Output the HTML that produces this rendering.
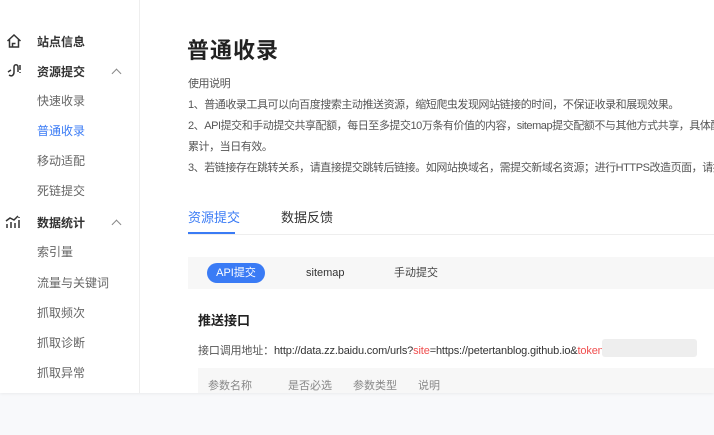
<!DOCTYPE html>
<html><head><meta charset="utf-8"><style>
*{margin:0;padding:0;box-sizing:border-box}
body{width:714px;height:435px;overflow:hidden;background:#f8f9fb;font-family:"Liberation Sans","Noto Sans CJK SC",sans-serif;position:relative;color:#333}
.main{position:absolute;left:0;top:0;width:714px;height:393px;background:#fff;box-shadow:0 1px 3px rgba(0,0,0,.06);overflow:hidden}
.side{position:absolute;left:0;top:0;width:140px;height:393px;border-right:1px solid #eee}
.it{position:absolute;left:37px;font-size:12px;color:#666;line-height:16px;white-space:nowrap}
.h{font-weight:bold;color:#333}
.act{color:#3a7bf5}
.chev{position:absolute;left:113px;width:7px;height:7px;border-left:1.3px solid #888;border-top:1.3px solid #888;transform:rotate(45deg)}
.t{position:absolute;white-space:nowrap}
</style></head><body>
<div class="main">
<div class="side">
<svg style="position:absolute;left:6px;top:33px" width="16" height="16" viewBox="0 0 16 16" fill="none" stroke="#333" stroke-width="1.5"><path d="M1.5 8 L8 2 L14.5 8 M3.5 6.5 V14 H12.5 V6.5 M6.5 14 V10.5 H9.5"/></svg>
<div class="it h" style="top:34px">站点信息</div>
<svg style="position:absolute;left:6px;top:63px" width="16" height="16" viewBox="0 0 16 16" fill="none" stroke="#333" stroke-width="1.5"><path d="M2 9 L5 7 M3 12 C6 14 8 12 8 9 V4 C8 1 12 1 12 4 V9 M14 2 V7 M14 9 V10"/></svg>
<div class="it h" style="top:64px">资源提交</div><div class="chev" style="top:70px"></div>
<div class="it" style="top:93px">快速收录</div>
<div class="it act" style="top:123px">普通收录</div>
<div class="it" style="top:153px">移动适配</div>
<div class="it" style="top:183px">死链提交</div>
<svg style="position:absolute;left:5px;top:214px" width="16" height="16" viewBox="0 0 16 16" fill="none" stroke="#333" stroke-width="1.5"><path d="M1 7 L5 4 L9 6 L13 2 M2 14 V10 M6 14 V8 M10 14 V9 M14 14 V6 M14 3 V4"/></svg>
<div class="it h" style="top:215px">数据统计</div><div class="chev" style="top:221px"></div>
<div class="it" style="top:244px">索引量</div>
<div class="it" style="top:275px">流量与关键词</div>
<div class="it" style="top:305px">抓取频次</div>
<div class="it" style="top:335px">抓取诊断</div>
<div class="it" style="top:365px">抓取异常</div>
</div>
<div class="t" style="left:187px;top:33px;font-size:22px;font-weight:bold;color:#222;letter-spacing:1px">普通收录</div>
<div class="t" style="left:188px;top:74px;font-size:11px;color:#555;line-height:21px;letter-spacing:-0.45px">使用说明<br>1、普通收录工具可以向百度搜索主动推送资源，缩短爬虫发现网站链接的时间，不保证收录和展现效果。<br>2、API提交和手动提交共享配额，每日至多提交10万条有价值的内容，sitemap提交配额不与其他方式共享，具体配额<br>累计，当日有效。<br>3、若链接存在跳转关系，请直接提交跳转后链接。如网站换域名，需提交新域名资源；进行HTTPS改造页面，请提</div>
<div class="t" style="left:188px;top:207px;font-size:13px;color:#3a7bf5">资源提交</div>
<div class="t" style="left:281px;top:207px;font-size:13px;color:#333">数据反馈</div>
<div style="position:absolute;left:188px;top:234px;width:526px;height:1px;background:#eee"></div>
<div style="position:absolute;left:188px;top:232px;width:47px;height:2px;background:#3a7bf5"></div>
<div style="position:absolute;left:188px;top:257px;width:526px;height:32px;background:#f7f7f7"></div>
<div style="position:absolute;left:207px;top:263px;width:58px;height:20px;border-radius:10px;background:#3a7bf5;color:#fff;font-size:11px;text-align:center;line-height:20px">API提交</div>
<div class="t" style="left:306px;top:266px;font-size:11px;line-height:14px;color:#333">sitemap</div>
<div class="t" style="left:394px;top:266px;font-size:11px;line-height:14px;color:#444">手动提交</div>
<div class="t" style="left:198px;top:310px;font-size:13px;font-weight:bold;color:#222">推送接口</div>
<div class="t" style="left:198px;top:342px;font-size:11px;color:#555;letter-spacing:-0.15px">接口调用地址：<span style="color:#333">http://data.zz.baidu.com/urls?</span><span style="color:#f04e4e">site</span><span style="color:#333">=https://petertanblog.github.io&amp;</span><span style="color:#f04e4e">token</span></div>
<div style="position:absolute;left:602px;top:339px;width:95px;height:18px;background:#eee;border-radius:3px"></div>
<div style="position:absolute;left:198px;top:368px;width:516px;height:25px;background:#f7f7f7"></div>
<div class="t" style="left:208px;top:377px;font-size:11px;color:#888">参数名称</div>
<div class="t" style="left:288px;top:377px;font-size:11px;color:#888">是否必选</div>
<div class="t" style="left:353px;top:377px;font-size:11px;color:#888">参数类型</div>
<div class="t" style="left:418px;top:377px;font-size:11px;color:#888">说明</div>
</div>
</body></html>
